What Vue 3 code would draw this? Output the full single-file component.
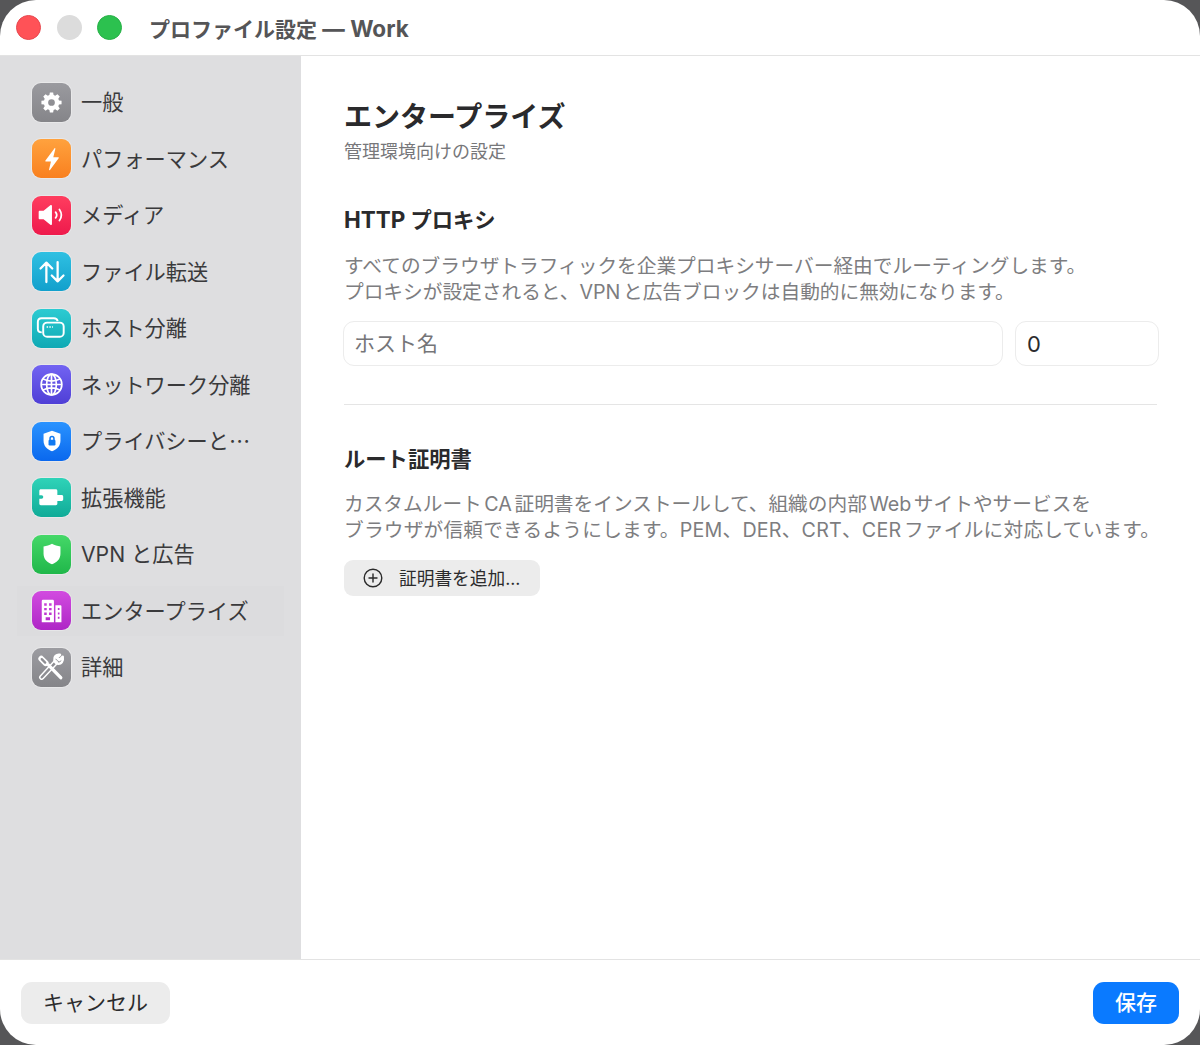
<script setup>
const items = [
  { id: 'general', label: '一般', bg: 'linear-gradient(#9a9a9f, #858589)' },
  { id: 'perf', label: 'パフォーマンス', bg: 'linear-gradient(#ffa23e, #f9801f)' },
  { id: 'media', label: 'メディア', bg: 'linear-gradient(#ff3d5f, #ee1a4c)' },
  { id: 'transfer', label: 'ファイル転送', bg: 'linear-gradient(#2fc0e2, #12a0cc)' },
  { id: 'host', label: 'ホスト分離', bg: 'linear-gradient(#2ccbd2, #0fa9b4)' },
  { id: 'network', label: 'ネットワーク分離', bg: 'linear-gradient(#7263f2, #4f3fd6)' },
  { id: 'privacy', label: 'プライバシーと⋯', bg: 'linear-gradient(#2a93ff, #0a68ee)' },
  { id: 'ext', label: '拡張機能', bg: 'linear-gradient(#2fd3b8, #10ab98)' },
  { id: 'vpn', label: 'VPN と広告', bg: 'linear-gradient(#45d868, #20b74a)' },
  { id: 'enterprise', label: 'エンタープライズ', bg: 'linear-gradient(#d24be0, #ae26c6)', active: true },
  { id: 'advanced', label: '詳細', bg: 'linear-gradient(#9c9ca1, #858589)' }
]
</script>

<template>
  <div class="window">
    <header class="titlebar">
      <div class="lights">
        <span class="light red"></span>
        <span class="light gray"></span>
        <span class="light green"></span>
      </div>
      <div class="title">プロファイル設定 <span class="title-app">— Work</span></div>
    </header>

    <div class="body">
      <aside class="sidebar">
        <div v-for="item in items" :key="item.id" class="item" :class="{ active: item.active }">
          <span class="icon" :style="{ background: item.bg }">
            <svg v-if="item.id === 'general'" viewBox="0 0 24 24" width="23" height="23">
              <path fill="#fff" fill-rule="evenodd" d="M10.3 1.500h3.400l.5 2.700 1.700.7 2.300-1.500 2.400 2.400-1.500 2.300.7 1.700 2.700.5v3.400l-2.700.5-.7 1.700 1.500 2.300-2.400 2.400-2.300-1.500-1.700.7-.5 2.700h-3.400l-.5-2.700-1.700-.7-2.300 1.500-2.400-2.400 1.500-2.300-.7-1.700-2.700-.5v-3.400l2.700-.5.7-1.700-1.500-2.300 2.400-2.400 2.300 1.500 1.700-.7zM12 8.500a3.500 3.500 0 1 0 0 7 3.500 3.500 0 0 0 0-7z"/>
            </svg>
            <svg v-else-if="item.id === 'perf'" viewBox="0 0 24 24" width="28" height="28">
              <path fill="#fff" d="M14.200 2.800 6.400 13.200c-.3.4 0 .9.4.9h4.300l-1.600 7c-.1.5.5.8.8.4l7.400-10.100c.3-.4 0-.9-.4-.9h-4.200l1.800-7.300c.1-.5-.5-.8-.7-.4z"/>
            </svg>
            <svg v-else-if="item.id === 'media'" viewBox="0 0 28 24" width="33" height="28">
              <path fill="#fff" d="M3 9.300c0-.6.4-1 1-1h3.200L13 3.600c.6-.5 1.400-.1 1.400.7v15.400c0 .8-.8 1.200-1.400.7l-5.800-4.700H4c-.6 0-1-.4-1-1z"/>
              <path fill="none" stroke="#fff" stroke-width="1.500" stroke-linecap="round" d="M17.500 9.500c1.200 1.500 1.200 3.500 0 5M20.800 7.200c2 2.900 2 6.700 0 9.600"/>
            </svg>
            <svg v-else-if="item.id === 'transfer'" viewBox="0 0 24 24" width="30" height="30" fill="none" stroke="#fff" stroke-width="1.800" stroke-linecap="round" stroke-linejoin="round">
              <path d="M7.500 20V4.500M2.800 9.200l4.700-4.700 4.700 4.700M16.500 4v15.500M11.800 14.800l4.700 4.700 4.700-4.700"/>
            </svg>
            <svg v-else-if="item.id === 'host'" viewBox="0 0 40 40" width="40" height="40" fill="none" stroke="#fff" stroke-width="2">
              <path d="M10 24.500c-2.400 0-4-1.400-4-3.700v-7C6 11.500 7.600 10 9.800 10h12.700c2 0 3.400 1 3.800 3"/>
              <rect x="11.500" y="14.500" width="21" height="14.500" rx="4"/>
              <path stroke-width="1.500" stroke-dasharray="1.500 1.300" d="M15 19h6.500"/>
            </svg>
            <svg v-else-if="item.id === 'network'" viewBox="0 0 24 24" width="27" height="27" fill="none" stroke="#fff" stroke-width="1.500">
              <circle cx="12" cy="12" r="9.200"/>
              <ellipse cx="12" cy="12" rx="4.300" ry="9.200"/>
              <path d="M12 2.800v18.400M2.800 12h18.400M4.300 7c2.400 1.300 5 2 7.700 2s5.300-.7 7.700-2M4.300 17c2.400-1.300 5-2 7.700-2s5.300.7 7.700 2"/>
            </svg>
            <svg v-else-if="item.id === 'privacy'" viewBox="0 0 24 24" width="26" height="26">
              <path fill="#fff" d="M12 2.600 19.800 5.400v6.300c0 4.800-3.200 8-7.800 9.700-4.600-1.700-7.800-4.900-7.800-9.700V5.400z"/>
              <rect x="8.800" y="10.800" width="6.400" height="5.400" rx="1.100" fill="#1079f2"/>
              <path fill="none" stroke="#1079f2" stroke-width="1.400" d="M10.200 11V9.600a1.800 1.800 0 0 1 3.600 0V11"/>
            </svg>
            <svg v-else-if="item.id === 'ext'" viewBox="0 0 40 40" width="40" height="40">
              <path fill="#fff" d="M7.500 12.500c0-.8.700-1.500 1.500-1.500h15.500c.8 0 1.500.7 1.500 1.500V17h4.500c.8 0 1.500.7 1.500 1.500v3c0 .8-.7 1.500-1.500 1.500H26v3c0 .8-.7 1.500-1.500 1.500H9c-.8 0-1.500-.7-1.500-1.500v-5.200h2.300a1.800 1.800 0 0 0 0-3.600H7.500z"/>
            </svg>
            <svg v-else-if="item.id === 'vpn'" viewBox="0 0 24 24" width="26" height="26">
              <path fill="#fff" d="M12 2.600c2.400 1.400 5 2.200 7.800 2.400v6.700c0 4.800-3.200 8-7.800 9.700-4.600-1.700-7.800-4.900-7.800-9.700V5c2.800-.2 5.400-1 7.800-2.400z"/>
            </svg>
            <svg v-else-if="item.id === 'enterprise'" viewBox="0 0 40 40" width="40" height="40">
              <path fill="#fff" fill-rule="evenodd" d="M10 9.800c0-.8.700-1.300 1.500-1.300h9.500c.8 0 1.500.5 1.500 1.300V31.500H10zM12.500 12v2.500h2.600V12zm5 0v2.500h2.600V12zm-5 4.800v2.500h2.600v-2.500zm5 0v2.500h2.600v-2.500zm-5 4.800v2.500h2.600v-2.500zm5 0v2.500h2.600v-2.500zm-3.500 4.900v3h4.500v-3z"/>
              <path fill="#fff" fill-rule="evenodd" d="M24 14h5.200c.6 0 1 .4 1 1v16.500H24zm2.500 3v2h1.700v-2zm0 4.500v2h1.700v-2zm0 4.500v2h1.700v-2z"/>
            </svg>
            <svg v-else viewBox="0 0 40 40" width="40" height="40" fill="none" stroke-linecap="round" stroke-linejoin="round">
              <path stroke="#fff" stroke-width="5.500" d="M10 30.500 24 15.500"/>
              <path stroke="#8e8e93" stroke-width="2.500" d="M10 30.500 24 15.500"/>
              <path stroke="#fff" stroke-width="2.600" d="M31.500 9.500 28 13l-2.500-2.500 3.200-3c-3.500-.8-6.500 2-5.700 5.500.3 1.500 1.500 3 3.300 3.500 3.500.8 6-2.200 5.200-6.500z"/>
              <path stroke="#fff" stroke-width="3.400" d="M17 18 29.500 31"/>
              <path stroke="#fff" stroke-width="6" d="M9.500 11.500 14 16"/>
              <path stroke="#8e8e93" stroke-width="2.400" d="M10 12l3.500 3.500"/>
            </svg>
          </span>
          <span class="label">{{ item.label }}</span>
        </div>
      </aside>

      <main class="content">
        <h1>エンタープライズ</h1>
        <p class="subtitle">管理環境向けの設定</p>

        <h2 class="proxy-head"><span class="latin">HTTP</span> プロキシ</h2>
        <p class="desc">すべてのブラウザトラフィックを企業プロキシサーバー経由でルーティングします。<br>プロキシが設定されると、VPN と広告ブロックは自動的に無効になります。</p>
        <div class="inputs">
          <div class="field host placeholder"><span>ホスト名</span></div>
          <div class="field port">0</div>
        </div>

        <div class="divider"></div>

        <h2>ルート証明書</h2>
        <p class="desc cert-desc">カスタムルート CA 証明書をインストールして、組織の内部 Web サイトやサービスを<br><span class="wide">ブラウザが信頼できるようにします。PEM、DER、CRT、CER ファイルに対応しています。</span></p>
        <button class="add" type="button">
          <svg viewBox="0 0 20 20" width="20" height="20" fill="none" stroke="#2a2a2a" stroke-width="1.400" stroke-linecap="round">
            <circle cx="10" cy="10" r="8.800"/>
            <path d="M10 6v8M6 10h8"/>
          </svg>
          <span>証明書を追加...</span>
        </button>
      </main>
    </div>

    <footer class="footer">
      <button class="btn cancel" type="button">キャンセル</button>
      <button class="btn save" type="button">保存</button>
    </footer>
  </div>
</template>

<style>
html, body {
  margin: 0;
  background: #565658;
}
</style>

<style scoped>
.window {
  width: 1200px;
  height: 1045px;
  display: flex;
  flex-direction: column;
  background: #fff;
  border-radius: 36px;
  overflow: hidden;
  font-family: "Inter", "Noto Sans CJK JP", sans-serif;
  color: #2b2b2d;
}

.titlebar {
  flex: none;
  display: flex;
  align-items: center;
  padding: 0 0 0 16px;
  box-sizing: border-box;
  border-bottom: 1px solid #e3e3e3;
  height: 56px;
}

.lights {
  display: flex;
  gap: 15.500px;
}

.light {
  width: 25px;
  height: 25px;
  border-radius: 50%;
  box-sizing: border-box;
}

.red { background: #ff5257; border: 1px solid #e6484f; }
.gray { background: #dcdcdc; }
.green { background: #2cc14f; border: 1px solid #27b047; }

.title {
  margin-left: 27px;
  font-size: 21px;
  font-weight: 600;
  color: #555557;
}

.title-app {
  font-size: 22.500px;
  font-weight: 700;
}

.body {
  flex: 1;
  display: flex;
  min-height: 0;
}

.sidebar {
  width: 301px;
  flex: none;
  background: #dedee0;
  padding: 18px 17px 0 17px;
  box-sizing: border-box;
}

.item {
  height: 56.500px;
  display: flex;
  align-items: center;
  gap: 10px;
  padding-left: 15px;
}

.item.active {
  background: linear-gradient(#dcdcde, #dcdcde) center / 100% 50px no-repeat;
}

.icon {
  width: 39px;
  height: 39px;
  flex: none;
  border-radius: 9px;
  display: flex;
  align-items: center;
  justify-content: center;
  box-shadow: 0 0 0 1px rgba(255, 255, 255, 0.3);
}

.label {
  padding-bottom: 3px;
  font-size: 21.200px;
  color: #3a3a3c;
  white-space: nowrap;
}

.content {
  flex: 1;
  padding: 42px 42px 0 43px;
  min-width: 0;
}

h1 {
  margin: 0;
  font-size: 28px;
  line-height: 38px;
  font-weight: 700;
  color: #2a2a2c;
}

.subtitle {
  margin: 3px 0 0;
  font-size: 18px;
  line-height: 26px;
  color: #77777a;
}

h2 {
  margin: 0;
  font-size: 21.300px;
  line-height: 30px;
  font-weight: 700;
  color: #2a2a2c;
}

.latin {
  font-size: 22.500px;
}

.proxy-head {
  margin-top: 40px;
}

.desc {
  margin: 17.500px 0 0;
  font-size: 19.700px;
  line-height: 26.500px;
  color: #7d7d80;
  white-space: nowrap;
  word-spacing: -3px;
}

.cert-desc {
  margin-top: 16.500px;
}

.wide {
  letter-spacing: 0.200px;
}

.inputs {
  display: flex;
  gap: 12px;
  margin: 15.500px -1px 0 -1px;
}

.field {
  height: 45px;
  box-sizing: border-box;
  border: 1px solid #ececec;
  border-radius: 11px;
  display: flex;
  align-items: center;
  padding-left: 10px;
  font-size: 21px;
}

.host {
  flex: 1;
}

.host span {
  padding-bottom: 3px;
}

.placeholder {
  color: #757578;
}

.port {
  width: 144px;
  padding-left: 11px;
  font-size: 22px;
  color: #2b2b2d;
}

.divider {
  height: 1px;
  background: #e5e5e5;
  margin: 38px 1px 39px 0;
}

.add {
  display: flex;
  align-items: center;
  gap: 16px;
  height: 36px;
  width: 196px;
  margin-top: 16px;
  padding: 0 0 0 19px;
  border: none;
  border-radius: 9px;
  background: #ececec;
  font-family: inherit;
  font-size: 17.700px;
  color: #2b2b2d;
}

.add span {
  padding-bottom: 1px;
}

.footer {
  height: 86px;
  flex: none;
  box-sizing: border-box;
  border-top: 1px solid #e3e3e3;
  display: flex;
  align-items: center;
  justify-content: space-between;
  padding: 0 21px;
}

.btn {
  height: 42px;
  padding: 0 0 3px;
  border: none;
  border-radius: 11px;
  font-family: inherit;
  font-size: 21px;
}

.cancel {
  width: 149px;
  background: #ececec;
  color: #2b2b2d;
}

.save {
  width: 86px;
  background: #0a7aff;
  color: #fff;
  font-weight: 500;
}
</style>
